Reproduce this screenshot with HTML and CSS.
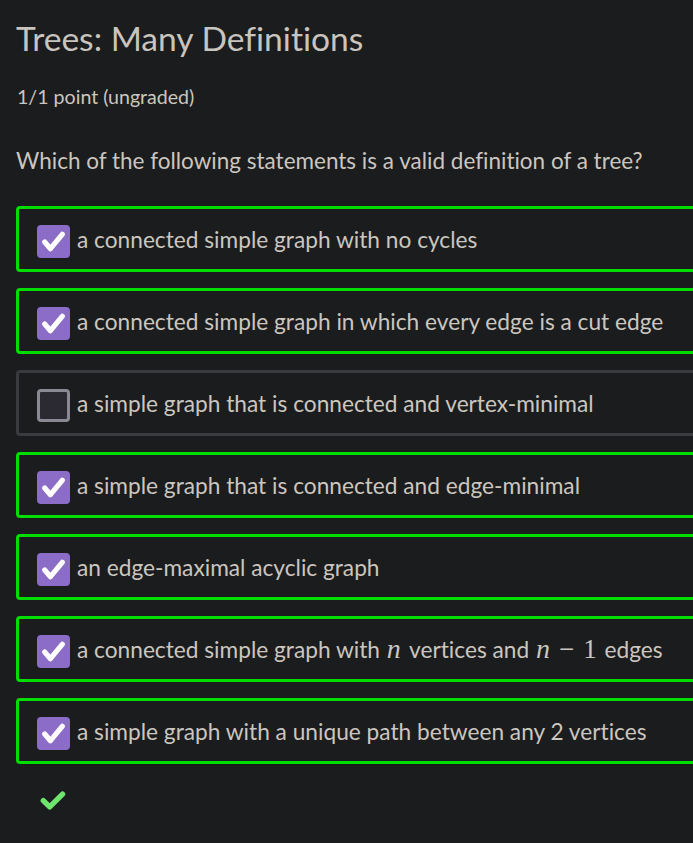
FILE: index.html
```html
<!DOCTYPE html>
<html lang="en">
<head>
<meta charset="utf-8">
<title>Trees: Many Definitions</title>
<link rel="stylesheet" href="styles.css">
</head>
<body>
<main class="page">
  <h1 class="title">Trees: Many Definitions</h1>
  <p class="points">1/1 point (ungraded)</p>
  <p class="question">Which of the following statements is a valid definition of a tree?</p>
  <ul class="options">
    <li class="option correct"><span class="box checked"><svg viewBox="0 0 32 32"><path d="M7.5 16.5l5.5 6.5L24.5 9" /></svg></span><span class="label">a connected simple graph with no cycles</span></li>
    <li class="option correct"><span class="box checked"><svg viewBox="0 0 32 32"><path d="M7.5 16.5l5.5 6.5L24.5 9" /></svg></span><span class="label">a connected simple graph in which every edge is a cut edge</span></li>
    <li class="option"><span class="box"></span><span class="label">a simple graph that is connected and vertex-minimal</span></li>
    <li class="option correct"><span class="box checked"><svg viewBox="0 0 32 32"><path d="M7.5 16.5l5.5 6.5L24.5 9" /></svg></span><span class="label">a simple graph that is connected and edge-minimal</span></li>
    <li class="option correct"><span class="box checked"><svg viewBox="0 0 32 32"><path d="M7.5 16.5l5.5 6.5L24.5 9" /></svg></span><span class="label">an edge-maximal acyclic graph</span></li>
    <li class="option correct"><span class="box checked"><svg viewBox="0 0 32 32"><path d="M7.5 16.5l5.5 6.5L24.5 9" /></svg></span><span class="label">a connected simple graph with <var class="mi">n</var> vertices and <var class="mi">n</var><span class="mo">−</span><span class="mn">1</span> edges</span></li>
    <li class="option correct"><span class="box checked"><svg viewBox="0 0 32 32"><path d="M7.5 16.5l5.5 6.5L24.5 9" /></svg></span><span class="label">a simple graph with a unique path between any 2 vertices</span></li>
  </ul>
  <div class="status"><svg viewBox="0 0 28 22"><path d="M4 11.5l6 6L22 5.5" /></svg></div>
</main>
</body>
</html>
```
FILE: styles.css
```css
html, body {
  margin: 0;
  padding: 0;
  background: #1b1c1e;
  overflow: hidden;
}
body {
  font-family: Lato, "Noto Sans", sans-serif;
  font-variant-ligatures: none;
  color: #cbc6bf;
}
.page {
  padding: 18px 0 0 16px;
  width: 720px;
}
.title {
  margin: 0;
  font-weight: 400;
  font-size: 33.6px;
  line-height: 40px;
  color: #c9c4bd;
}
.points {
  margin: 28px 0 0 1px;
  font-size: 19.6px;
  line-height: 22px;
}
.question {
  margin: 40px 0 0 0;
  font-size: 22.5px;
  line-height: 26px;
}
.options {
  list-style: none;
  margin: 32px 0 0 0;
  padding: 0;
  display: flex;
  flex-direction: column;
  gap: 16px;
}
.option {
  height: 66px;
  box-sizing: border-box;
  border: 3px solid #3a3b3e;
  border-radius: 4px;
  display: flex;
  align-items: center;
  padding: 4px 0 0 18px;
  font-size: 22.7px;
}
.option.correct {
  border-color: #00dd00;
}
.box {
  width: 33px;
  height: 33px;
  box-sizing: border-box;
  border-radius: 4px;
  border: 3px solid #8a8892;
  background: #2b2a33;
  flex: none;
  margin-right: 7px;
  display: flex;
}
.box.checked {
  border: none;
  background: #8b6cc6;
}
.box svg {
  width: 33px;
  height: 33px;
}
.box svg path {
  fill: none;
  stroke: #fff;
  stroke-width: 5;
  stroke-linecap: round;
  stroke-linejoin: round;
}
.label {
  white-space: nowrap;
  margin-top: -4px;
}
.mi {
  font-family: "Liberation Serif", "DejaVu Serif", serif;
  font-style: italic;
  font-size: 28px;
  margin: 0 3px 0 1px;
}
.mo, .mn {
  font-family: "Liberation Serif", "DejaVu Serif", serif;
  font-size: 27px;
}
.mo {
  margin: 0 9px 0 6px;
}
.mn {
  margin-right: 2px;
}
.status {
  margin: 24px 0 0 23px;
  width: 30px;
  height: 24px;
}
.status svg {
  width: 30px;
  height: 24px;
}
.status svg path {
  fill: none;
  stroke: #6ee66e;
  stroke-width: 5;
  stroke-linecap: round;
  stroke-linejoin: round;
}
```
